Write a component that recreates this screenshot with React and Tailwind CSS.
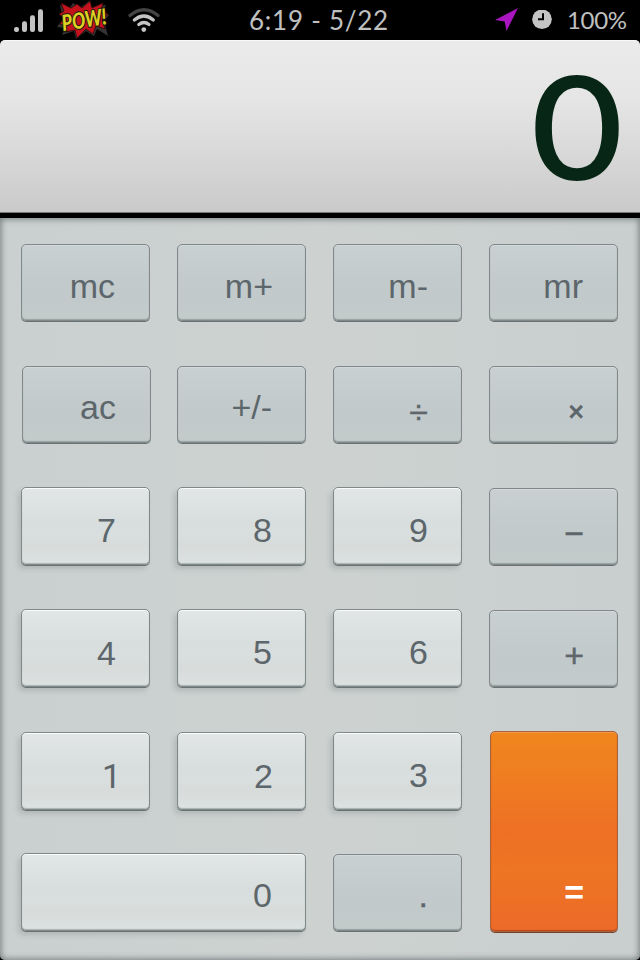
const dark =
  "h-[77px] border-[#80888a] bg-[linear-gradient(180deg,#c9d0d2_0%,#c2cacc_50%,#c1c9cb_72%,#c3cbca_100%)] shadow-[inset_0_1px_0_#d3d9da,inset_0_-1px_1px_#96a1a2,0_1px_0_#697172]";
const light =
  "h-[78px] -mt-px border-[#80888a] bg-[linear-gradient(180deg,#e2e6e6_0%,#d8dddd_45%,#d9dfdf_60%,#d7dbda_75%,#dce1e1_100%)] shadow-[inset_0_1px_0_#fafcfc,inset_0_-1px_1px_#aab2b2,0_1px_0_#697172,-3px_4px_5px_rgba(90,100,100,0.22)]";
const heavy = "text-[34px] text-[#5c666b] [-webkit-text-stroke:0.4px_#5c666b]";

const keys = [
  { label: "mc", kind: dark, pos: "pt-[24px] pr-[34px]" },
  { label: "m+", kind: dark, pos: "pt-[24px] pr-[32px]" },
  { label: "m-", kind: dark, pos: "pt-[24px] pr-[33px]" },
  { label: "mr", kind: dark, pos: "pt-[24px] pr-[34px]" },
  { label: "ac", kind: dark, pos: "pt-[23px] pr-[34px]", extra: "ml-px w-[129px]" },
  { label: "+/-", kind: dark, pos: "pt-[23px] pr-[33px]" },
  { label: "÷", kind: dark, pos: "pt-[28px] pr-[33px]", text: heavy },
  { label: "×", kind: dark, pos: "pt-[28px] pr-[33px]", text: "font-bold text-[27px]" },
  { label: "7", kind: light, pos: "pt-[25px] pr-[33px]" },
  { label: "8", kind: light, pos: "pt-[25px] pr-[33px]" },
  { label: "9", kind: light, pos: "pt-[25px] pr-[33px]" },
  { label: "−", kind: dark, pos: "pt-[27px] pr-[33px]", text: heavy },
  { label: "4", kind: light, pos: "pt-[26px] pr-[33px]" },
  { label: "5", kind: light, pos: "pt-[25px] pr-[33px]" },
  { label: "6", kind: light, pos: "pt-[25px] pr-[33px]" },
  { label: "+", kind: dark, pos: "pt-[27px] pr-[33px]", text: heavy },
  {
    label: "1",
    kind: light,
    pos: "pt-[26px] pr-[28px]",
    text: "font-['Roboto',sans-serif] text-[34px]",
    extra: "mt-0",
  },
  { label: "2", kind: light, pos: "pt-[26px] pr-[32px]", extra: "mt-0" },
  { label: "3", kind: light, pos: "pt-[25px] pr-[33px]", extra: "mt-0" },
  {
    label: "=",
    kind:
      "-mt-px ml-px h-[201px] w-[128px] border-[#a8613a] bg-[linear-gradient(180deg,#f0861d_0%,#ef7f20_18%,#ee7024_50%,#ee7523_70%,#ed6a29_100%)] shadow-[inset_0_1px_0_#f29a4b,inset_0_-1px_1px_#b5491c,0_1px_0_#74402c]",
    pos: "pt-[143px] pr-[33px]",
    text: "font-bold text-[34px] text-white",
    extra: "row-span-2",
  },
  { label: "0", kind: light, pos: "pt-[24px] pr-[33px]", extra: "col-span-2" },
  { label: ".", kind: dark, pos: "pt-[23px] pr-[33px]", text: heavy },
];

function Key({ label, kind, pos, text = "text-[34px]", extra = "" }) {
  return (
    <button
      type="button"
      className={`flex items-start justify-end rounded-[5px] border leading-[34px] ${kind} ${pos} ${text} ${extra}`}
    >
      {label}
    </button>
  );
}

function Signal() {
  return (
    <svg className="ml-[14px] shrink-0" width="30" height="24" viewBox="0 0 30 24" fill="#c4c4c4">
      <rect x="0" y="19" width="5" height="5" rx="2.2" />
      <rect x="8" y="13.2" width="5" height="10.8" rx="2.2" />
      <rect x="16" y="7.2" width="5" height="16.8" rx="2.2" />
      <rect x="24" y="1.2" width="5" height="22.8" rx="2.2" />
    </svg>
  );
}

function Pow() {
  return (
    <svg className="ml-[13px] shrink-0" width="54" height="40" viewBox="57 0 54 40">
      <path d="M60 5 69 9 73 3 80 8 89 1 92 7 106 5 103 11 109 15 104 21 108 36 97 29 94 36 86 31 76 39 74 31 62 35 65 28 57 27 63 19Z" fill="#343434" />
      <path d="M61 3 71 8 77 4 82 8 90 1 92 8 103 3 101 11 108 14 102 20 105 29 96 26 93 34 86 29 77 38 75 30 65 32 66 26 60 24 64 18 59 14 64 11Z" fill="#c5131d" stroke="#3c0a0c" />
      <text
        x="63"
        y="31"
        transform="rotate(-9 63 31)"
        textLength="45"
        lengthAdjust="spacingAndGlyphs"
        fill="#ddd123"
        stroke="#211b0c"
        strokeWidth="2.2"
        paintOrder="stroke"
        fontFamily="Lato, sans-serif"
        fontWeight="900"
        fontStyle="italic"
        fontSize="22"
      >
        POW!
      </text>
    </svg>
  );
}

function Wifi() {
  return (
    <svg className="ml-[17px] shrink-0" width="32" height="26" viewBox="128 7 32 26" fill="none" strokeWidth="3.2" strokeLinecap="round">
      <path d="M130 15.5Q144 4 158 15.5" stroke="#444" />
      <path d="M134.3 20Q144 12 153.3 20" stroke="#c4c4c4" />
      <path d="M138.8 24.5Q144 20.5 149 24.5" stroke="#c4c4c4" />
      <circle cx="143.8" cy="29.6" r="2.4" fill="#c4c4c4" />
    </svg>
  );
}

export default function App() {
  return (
    <div className="flex h-[960px] w-[640px] flex-col overflow-hidden bg-black font-['Liberation_Sans',Arial,sans-serif] text-[#5c666b]">
      <header className="flex h-10 shrink-0 items-center text-[#c0c0c0]">
        <div className="flex w-[249px] shrink-0 items-center">
          <Signal />
          <Pow />
          <Wifi />
        </div>
        <div className="w-[240px] shrink-0 whitespace-nowrap font-['Lato',sans-serif] text-[26px] leading-10 tracking-[0.75px]">
          6:19 - 5/22
        </div>
        <svg className="ml-[4px] shrink-0" width="26" height="24" viewBox="0 0 26 24">
          <path d="M2 12 25 0 13.5 23 11.7 13.5Z" fill="#a916c0" />
        </svg>
        <svg className="ml-[13px] shrink-0" width="20" height="20" viewBox="0 0 20 20">
          <circle cx="10" cy="9.3" r="9.8" fill="#c4c4c4" />
          <path d="M11 3.3V9.3H6" fill="none" stroke="#000" strokeWidth="2" />
        </svg>
        <div className="ml-[15px] whitespace-nowrap font-['Lato',sans-serif] text-[24px] leading-10 tracking-[-0.3px]">
          100%
        </div>
      </header>

      <section className="flex h-[173px] shrink-0 items-start justify-end rounded-t-[5px] border-t border-b border-t-[#f8f8f8] border-b-[#777] bg-[linear-gradient(180deg,#ebebeb_0%,#e5e5e5_35%,#cacaca_100%)]">
        <span className="mr-[18px] block origin-right scale-x-[1.1] font-['Lato',sans-serif] text-[142px] leading-[167px] text-[#082615] [-webkit-text-stroke:2px_#082615]">
          0
        </span>
      </section>

      <main className="mt-[5px] grid flex-1 grid-cols-[129px_129px_129px_129px] grid-rows-[repeat(6,78px)] items-start gap-x-[27px] gap-y-[44px] rounded-b-[5px] bg-[linear-gradient(90deg,#cad0cf,#cdd2d1_50%,#c9cfce)] pt-[26px] pl-[21px] shadow-[inset_0_0_6px_1px_#737a7b]">
        {keys.map((key) => (
          <Key key={key.label} {...key} />
        ))}
      </main>
    </div>
  );
}
